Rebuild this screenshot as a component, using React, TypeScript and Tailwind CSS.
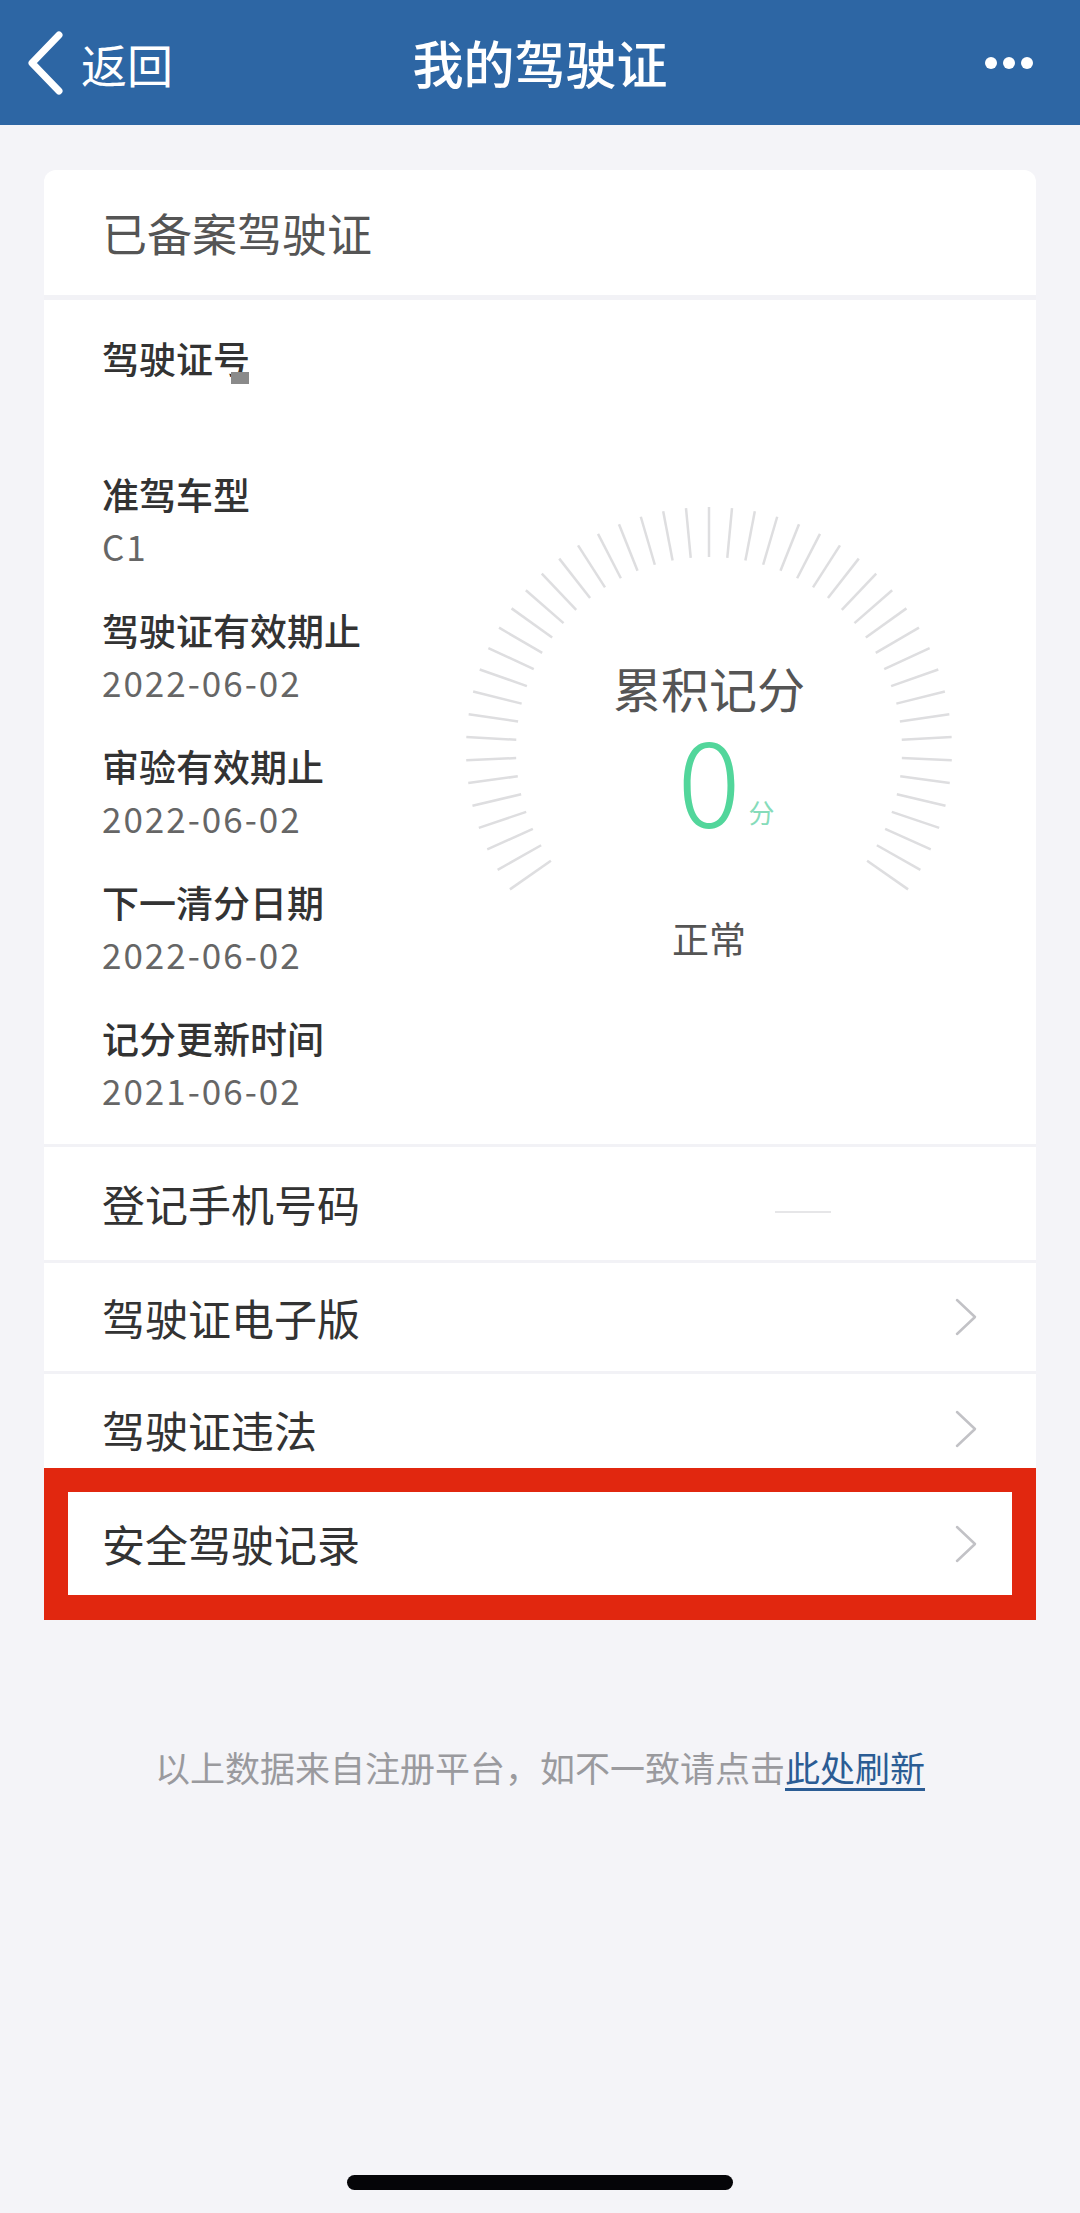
const INFO = [
  { label: "驾驶证号", value: "" },
  { label: "准驾车型", value: "C1" },
  { label: "驾驶证有效期止", value: "2022-06-02" },
  { label: "审验有效期止", value: "2022-06-02" },
  { label: "下一清分日期", value: "2022-06-02" },
  { label: "记分更新时间", value: "2021-06-02" },
];

// 47 ticks across a 250° arc, open at the bottom
const TICKS = Array.from({ length: 47 }, (_, i) => {
  const a = ((145 + i * (250 / 46)) * Math.PI) / 180;
  return {
    x1: 250 + 193 * Math.cos(a),
    y1: 250 + 193 * Math.sin(a),
    x2: 250 + 243 * Math.cos(a),
    y2: 250 + 243 * Math.sin(a),
  };
});

function Chevron() {
  return (
    <svg width="22" height="38" viewBox="0 0 22 38" fill="none" className="shrink-0">
      <path d="M2 2 L20 19 L2 36" stroke="#c2c2c6" strokeWidth="2.5" strokeLinecap="round" strokeLinejoin="round" />
    </svg>
  );
}

function Gauge() {
  return (
    <div className="relative w-[500px] h-[500px] ml-[57px] mt-[168px] shrink-0">
      <svg className="absolute inset-0" width="500" height="500" viewBox="0 0 500 500">
        {TICKS.map((t, i) => (
          <line key={i} x1={t.x1} y1={t.y1} x2={t.x2} y2={t.y2} stroke="#dedee0" strokeWidth="2.5" />
        ))}
      </svg>
      <div className="relative flex flex-col items-center pt-[157px]">
        <span className="text-[48px] leading-[60px] text-[#555]">累积记分</span>
        <span className="relative text-[118px] leading-[118px] text-[#52d69b] font-light">
          0
          <span className="absolute left-[calc(100%+8px)] bottom-[8px] text-[26px] leading-[30px] text-[#86dcba] font-normal">
            分
          </span>
        </span>
        <span className="mt-[78px] text-[37px] leading-[50px] text-[#555]">正常</span>
      </div>
    </div>
  );
}

export default function App() {
  return (
    <div className="w-full min-h-[2213px] flex flex-col bg-[#f4f4f8] font-['Noto_Sans_CJK_SC','Noto_Sans',sans-serif]">
      {/* Header */}
      <div className="relative h-[125px] bg-[#2d66a4] flex items-center justify-between shrink-0">
        <div className="flex items-center pl-[26px]">
          <svg width="38" height="64" viewBox="0 0 38 64" fill="none">
            <path d="M33 4 L6 32 L33 60" stroke="white" strokeWidth="7" strokeLinecap="round" strokeLinejoin="round" />
          </svg>
          <span className="ml-[17px] text-[46px] leading-none text-white">返回</span>
        </div>
        <span className="absolute left-1/2 -translate-x-1/2 text-[51px] leading-none font-medium text-white">
          我的驾驶证
        </span>
        <div className="flex items-center gap-[6px] pr-[47px]">
          <span className="w-[12px] h-[12px] rounded-full bg-white" />
          <span className="w-[12px] h-[12px] rounded-full bg-white" />
          <span className="w-[12px] h-[12px] rounded-full bg-white" />
        </div>
      </div>

      {/* Card */}
      <div className="mx-[44px] mt-[45px] bg-white rounded-t-[12px] flex flex-col">
        <div className="h-[125px] flex items-center pl-[58px]">
          <span className="text-[45px] text-[#555]">已备案驾驶证</span>
        </div>
        <div className="h-[5px] bg-[#f2f2f6]" />

        {/* Info + gauge */}
        <div className="h-[844px] flex items-start pl-[58px] pt-[32px]">
          <div className="w-[300px] flex flex-col gap-[32px] shrink-0">
            {INFO.map((item) => (
              <div key={item.label} className="flex flex-col">
                <span className="relative self-start text-[37px] leading-[52px] font-medium text-[#333] whitespace-nowrap">
                  {item.label}
                  {item.value === "" && (
                    <span className="absolute right-[1px] top-[40px] w-[18px] h-[12px] bg-[#8a8a8a]" />
                  )}
                </span>
                <span className="h-[52px] text-[35px] leading-[52px] tracking-[2px] text-[#666]">{item.value}</span>
              </div>
            ))}
          </div>
          <Gauge />
        </div>
        <div className="h-[3px] bg-[#f2f2f6]" />

        <div className="h-[113px] flex items-center pl-[58px]">
          <span className="text-[43px] text-[#333]">登记手机号码</span>
          <span className="ml-auto mr-[205px] mt-[16px] w-[56px] h-[2px] bg-[#e6e6e8]" />
        </div>
        <div className="h-[3px] bg-[#f2f2f6]" />

        <div className="h-[108px] flex items-center justify-between pl-[58px] pr-[59px]">
          <span className="text-[43px] text-[#333]">驾驶证电子版</span>
          <Chevron />
        </div>
        <div className="h-[3px] bg-[#f2f2f6]" />

        <div className="h-[94px] pt-[16px] flex items-center justify-between pl-[58px] pr-[59px]">
          <span className="text-[43px] text-[#333]">驾驶证违法</span>
          <Chevron />
        </div>

        <div className="border-[24px] border-b-[25px] border-[#e1270f]">
          <div className="h-[103px] flex items-center justify-between pl-[34px] pr-[35px] bg-white">
            <span className="text-[43px] text-[#333]">安全驾驶记录</span>
            <Chevron />
          </div>
        </div>
      </div>

      {/* Footer note */}
      <p className="mt-[122px] text-center text-[35px] leading-[50px] text-[#9a9a9e]">
        以上数据来自注册平台，如不一致请点击
        <span className="text-[#2b5c94] underline underline-offset-[6px]">此处刷新</span>
      </p>

      {/* Home indicator */}
      <div className="mt-auto mb-[23px] self-center w-[386px] h-[15px] rounded-full bg-[#050508]" />
    </div>
  );
}
